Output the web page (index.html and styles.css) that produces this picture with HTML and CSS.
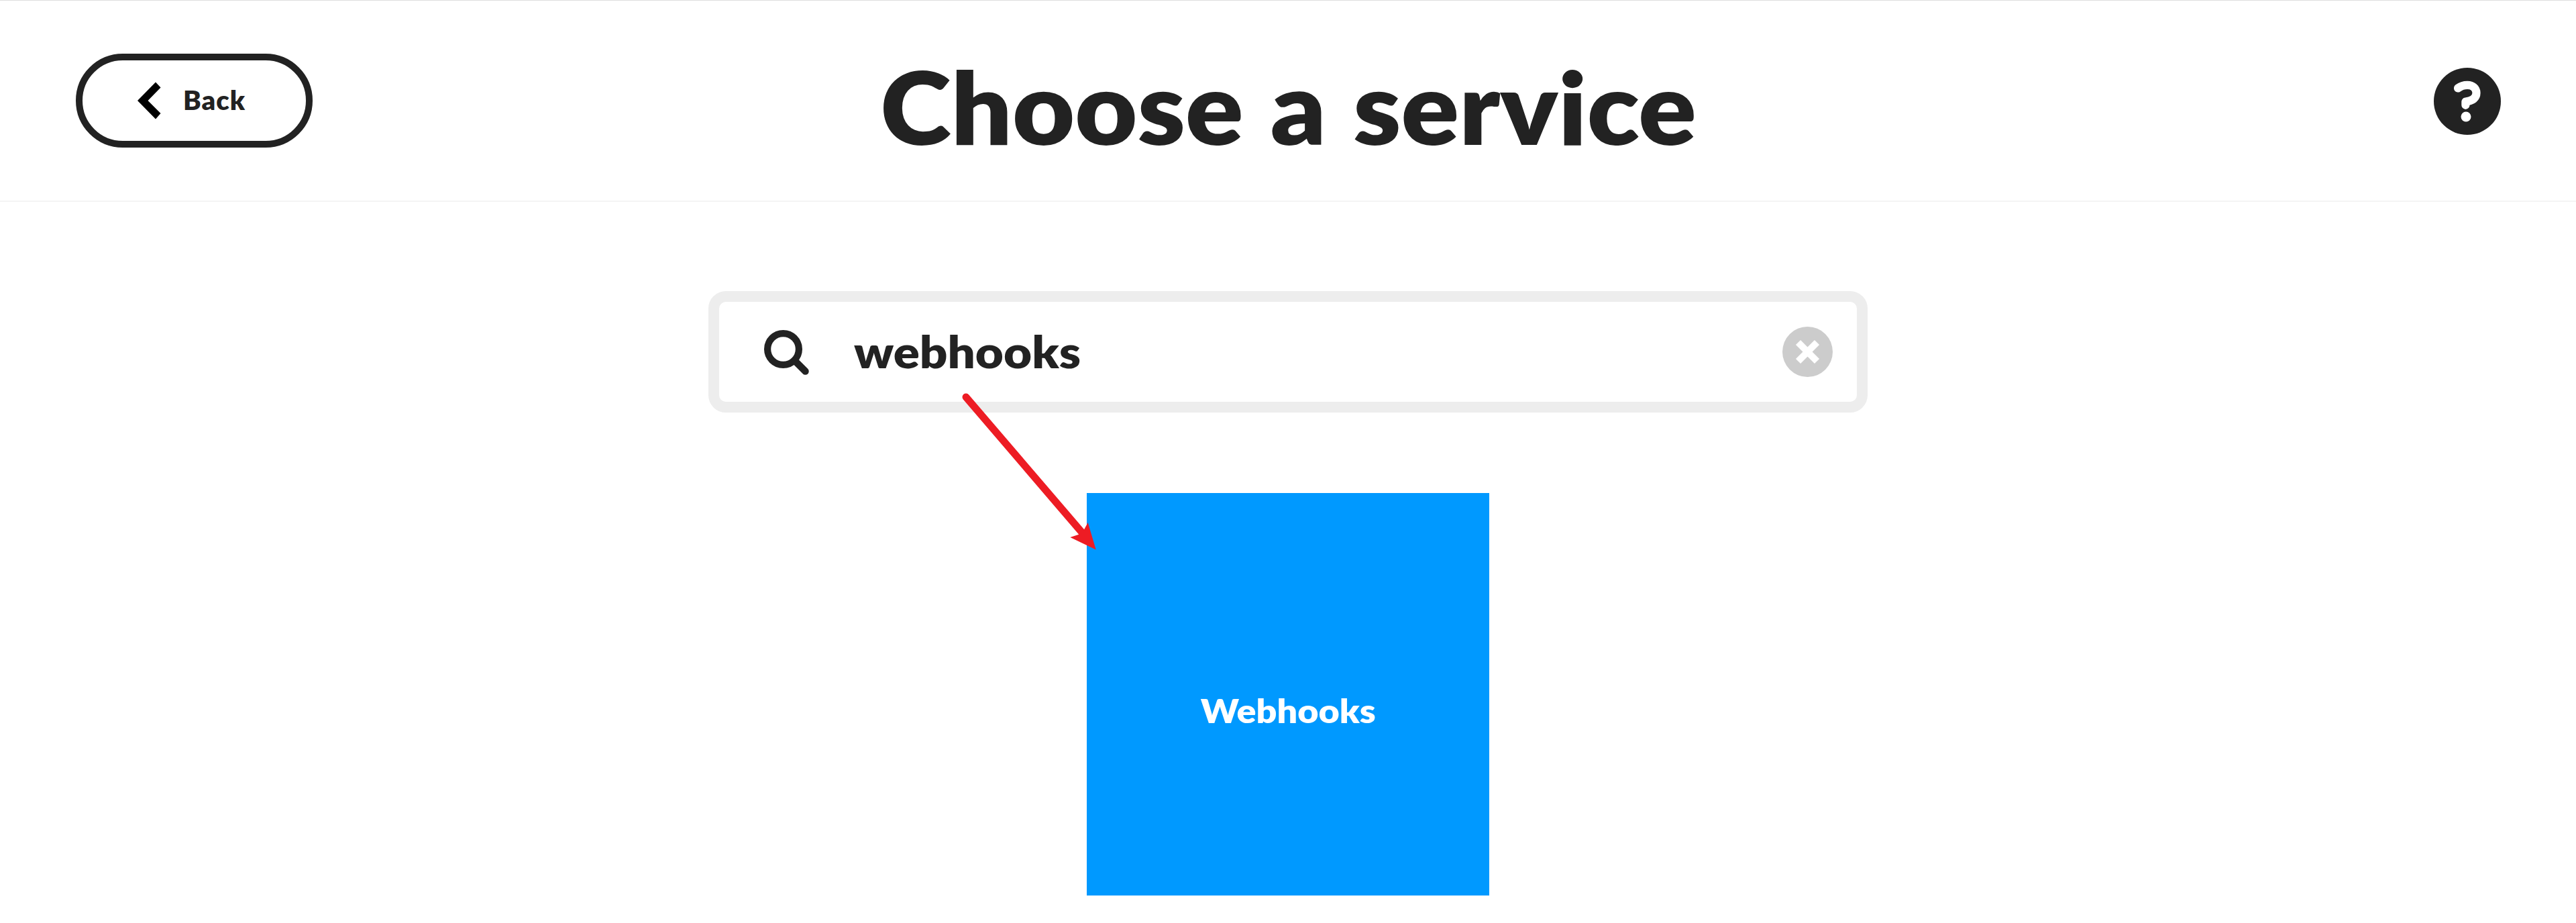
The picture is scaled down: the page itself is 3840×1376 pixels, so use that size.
FILE: index.html
```html
<!DOCTYPE html>
<html lang="en">
<head>
<meta charset="utf-8">
<title>Choose a service</title>
<link rel="stylesheet" href="styles.css">
</head>
<body>
<header class="header">
  <button class="back" type="button">
    <svg class="back-icon" width="35" height="56" viewBox="0 0 35 56" aria-hidden="true"><path d="M27 0.5 34.500 8.500 15.500 28 34.500 47 27 55.500 0 28Z"/></svg>
    <span class="back-label">Back</span>
  </button>
  <h1 class="title">Choose a service</h1>
  <a class="help" aria-label="Help">
    <svg width="100" height="100" viewBox="0 0 100 100" aria-hidden="true">
      <circle cx="50" cy="50" r="50" fill="#222"/>
      <path d="M36 30.500C40 27.500 45 25.800 50 25.800C58 25.800 63.500 30.500 63.500 37.500C63.500 45 58 49.500 47.400 50.500V55.800" fill="none" stroke="#fff" stroke-width="12.200" stroke-linecap="round" stroke-linejoin="round"/>
      <circle cx="48" cy="73" r="7.500" fill="#fff"/>
    </svg>
  </a>
</header>
<main class="main">
  <div class="search">
    <svg class="search-icon" width="67" height="67" viewBox="0 0 67 67" aria-hidden="true">
      <circle cx="28.500" cy="28.500" r="23.400" fill="none" stroke="#222" stroke-width="10.200"/>
      <path d="M46 46 61.500 61.500" stroke="#222" stroke-width="10.500" stroke-linecap="round"/>
    </svg>
    <span class="query">webhooks</span>
    <svg class="clear" width="75" height="75" viewBox="0 0 75 75" aria-hidden="true">
      <circle cx="37.500" cy="37.500" r="37.500" fill="#ccc"/>
      <path d="M23.500 23.500 51.500 51.500M51.500 23.500 23.500 51.500" stroke="#fff" stroke-width="10"/>
    </svg>
  </div>
  <a class="tile"><span class="tile-name">Webhooks</span></a>
</main>
<svg class="arrow" width="210" height="240" viewBox="0 0 210 240" aria-hidden="true">
  <path d="M10 12 183 214" stroke="#ed1c24" stroke-width="11" stroke-linecap="round"/>
  <path d="M203.700 239.500 165.300 221 177.500 217 185.500 210.500 191.700 199Z" fill="#ed1c24"/>
</svg>
</body>
</html>
```
FILE: styles.css
```css
* { box-sizing: border-box; }

body {
  margin: 0;
  min-height: 1376px;
  position: relative;
  background: #fff;
  color: #222;
  font-family: Lato, "Open Sans", sans-serif;
  font-weight: 800;
}

svg { display: block; flex: none; }

.header {
  display: grid;
  grid-template-columns: 1fr auto 1fr;
  align-items: center;
  height: 301px;
  padding: 0 112px 0 113px;
  border-top: 1px solid #ddd;
  border-bottom: 2px solid #f4f4f4;
}

.back {
  display: flex;
  align-items: center;
  justify-self: start;
  width: 353px;
  height: 140px;
  padding: 0 0 0 82px;
  gap: 33px;
  border: 10px solid #222;
  border-radius: 70px;
  background: #fff;
  color: #222;
  font: inherit;
  font-size: 40px;
  line-height: 48px;
  letter-spacing: 1px;
}

.back-icon { fill: #000; }

.back-label { margin-top: -2px; }

.title {
  margin: 0;
  padding-top: 15px;
  font-size: 150px;
  font-weight: 800;
  line-height: 180px;
  word-spacing: 3px;
  white-space: nowrap;
  transform: scaleX(1.07);
}

.help { justify-self: end; padding-top: 2px; }

.main {
  display: flex;
  flex-direction: column;
  align-items: center;
  gap: 120px;
  padding-top: 133px;
}

.search {
  display: flex;
  align-items: center;
  width: 1728px;
  height: 181px;
  padding: 0 36px 0 67px;
  border: 16px solid #ededed;
  border-radius: 26px;
}

.search-icon { margin-top: 2px; }

.query {
  margin: -4px auto 0 67px;
  font-size: 67px;
  line-height: 80px;
  transform: scaleX(1.083);
  transform-origin: left;
}

.tile {
  display: flex;
  align-items: center;
  justify-content: center;
  width: 600px;
  height: 600px;
  padding-top: 48px;
  background: #09f;
  color: #fff;
  font-size: 50px;
  line-height: 60px;
}

.tile-name { transform: scaleX(1.077); }

/* Annotation pointing from the query to the matching tile */
.arrow {
  position: absolute;
  left: 1430px;
  top: 580px;
}
```
